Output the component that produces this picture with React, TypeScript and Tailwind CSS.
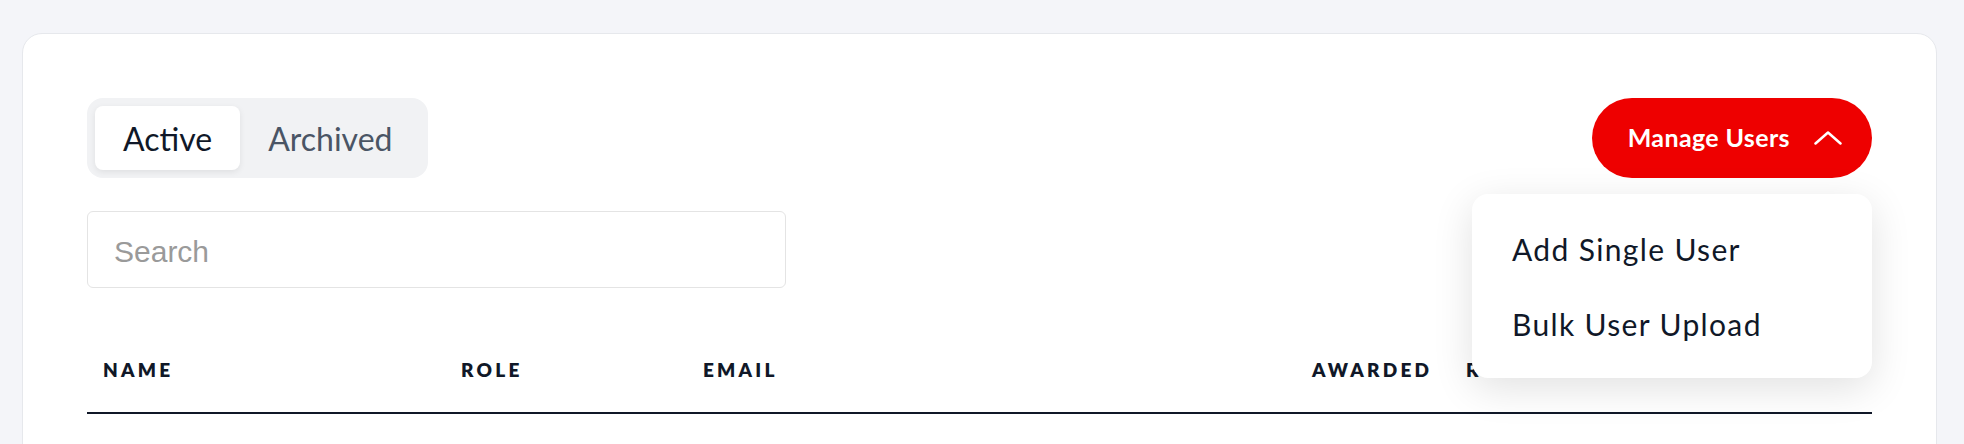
import { useState } from 'react';

const columns = [
  { label: 'NAME', width: 'w-[358px]' },
  { label: 'ROLE', width: 'w-[242px]' },
  { label: 'EMAIL', width: 'w-[609px]' },
  { label: 'AWARDED', width: 'w-[154px]' },
  { label: 'REMAINING', width: '' },
];

export default function App() {
  const [tab, setTab] = useState<'active' | 'archived'>('active');
  const [search, setSearch] = useState('');
  const [menuOpen, setMenuOpen] = useState(true);

  return (
    <div className="min-h-screen bg-[#f4f5f9] pt-[33px] pl-[22px] pr-[27px] font-['Lato',sans-serif]">
      <div className="bg-white border border-[#e6e8ec] rounded-[20px] pt-[64px] px-[64px] pb-[120px]">
        {/* Top bar */}
        <div className="flex justify-between items-start">
          <div>
            {/* Tabs */}
            <div className="inline-flex bg-[#f1f2f4] rounded-[16px] p-2">
              <button
                onClick={() => setTab('active')}
                className={`h-16 px-7 pt-0.5 rounded-[8px] text-[32px] leading-none ${
                  tab === 'active'
                    ? 'bg-white text-[#101828] shadow-[0_2px_6px_rgba(0,0,0,0.08)]'
                    : 'text-[#4a5565]'
                }`}
              >
                Active
              </button>
              <button
                onClick={() => setTab('archived')}
                className={`h-16 px-7 pt-0.5 rounded-[8px] text-[32px] leading-none ${
                  tab === 'archived'
                    ? 'bg-white text-[#101828] shadow-[0_2px_6px_rgba(0,0,0,0.08)]'
                    : 'text-[#4a5565]'
                }`}
              >
                Archived
              </button>
            </div>

            {/* Search */}
            <input
              type="text"
              placeholder="Search"
              value={search}
              onChange={(e) => setSearch(e.target.value)}
              className="block mt-[33px] w-[699px] h-[77px] pl-[26px] pr-4 pt-1 border-[1.5px] border-[#e4e4e4] rounded-[6px] font-['Liberation_Sans',Arial,sans-serif] text-[30px] text-[#333] placeholder:text-[#9a9a9a] outline-none"
            />
          </div>

          {/* Manage users */}
          <div className="relative">
            <button
              onClick={() => setMenuOpen(!menuOpen)}
              className="flex items-center gap-[24px] h-20 pl-[36px] pr-[30px] rounded-full bg-[#ee0000] text-white text-[25px] tracking-[0.015em] font-bold"
            >
              Manage Users
              <svg width="28" height="14" viewBox="0 0 28 14" fill="none">
                <path d="M1.5 12.5L14 1.5L26.5 12.5" stroke="white" strokeWidth="2.5" strokeLinecap="round" strokeLinejoin="round" />
              </svg>
            </button>
            {menuOpen && (
              <div className="absolute right-0 top-[96px] w-[400px] bg-white rounded-[16px] pt-[18px] pb-[16px] shadow-[0_10px_40px_rgba(0,0,0,0.12)] z-10">
                <div className="h-[75px] flex items-center px-10 text-[30px] tracking-[0.045em] text-[#101828]">Add Single User</div>
                <div className="h-[75px] flex items-center px-10 text-[30px] tracking-[0.045em] text-[#101828]">Bulk User Upload</div>
              </div>
            )}
          </div>
        </div>

        {/* Table */}
        <table className="mt-[40px] w-full border-collapse">
          <thead>
            <tr className="border-b-2 border-[#101828]">
              {columns.map((col) => (
                <th
                  key={col.label}
                  className={`${col.width} px-4 pt-[30px] pb-[30px] text-left text-[19px] leading-6 font-extrabold tracking-[0.17em] text-[#101828] whitespace-nowrap`}
                >
                  {col.label}
                </th>
              ))}
            </tr>
          </thead>
          <tbody />
        </table>
      </div>
    </div>
  );
}
